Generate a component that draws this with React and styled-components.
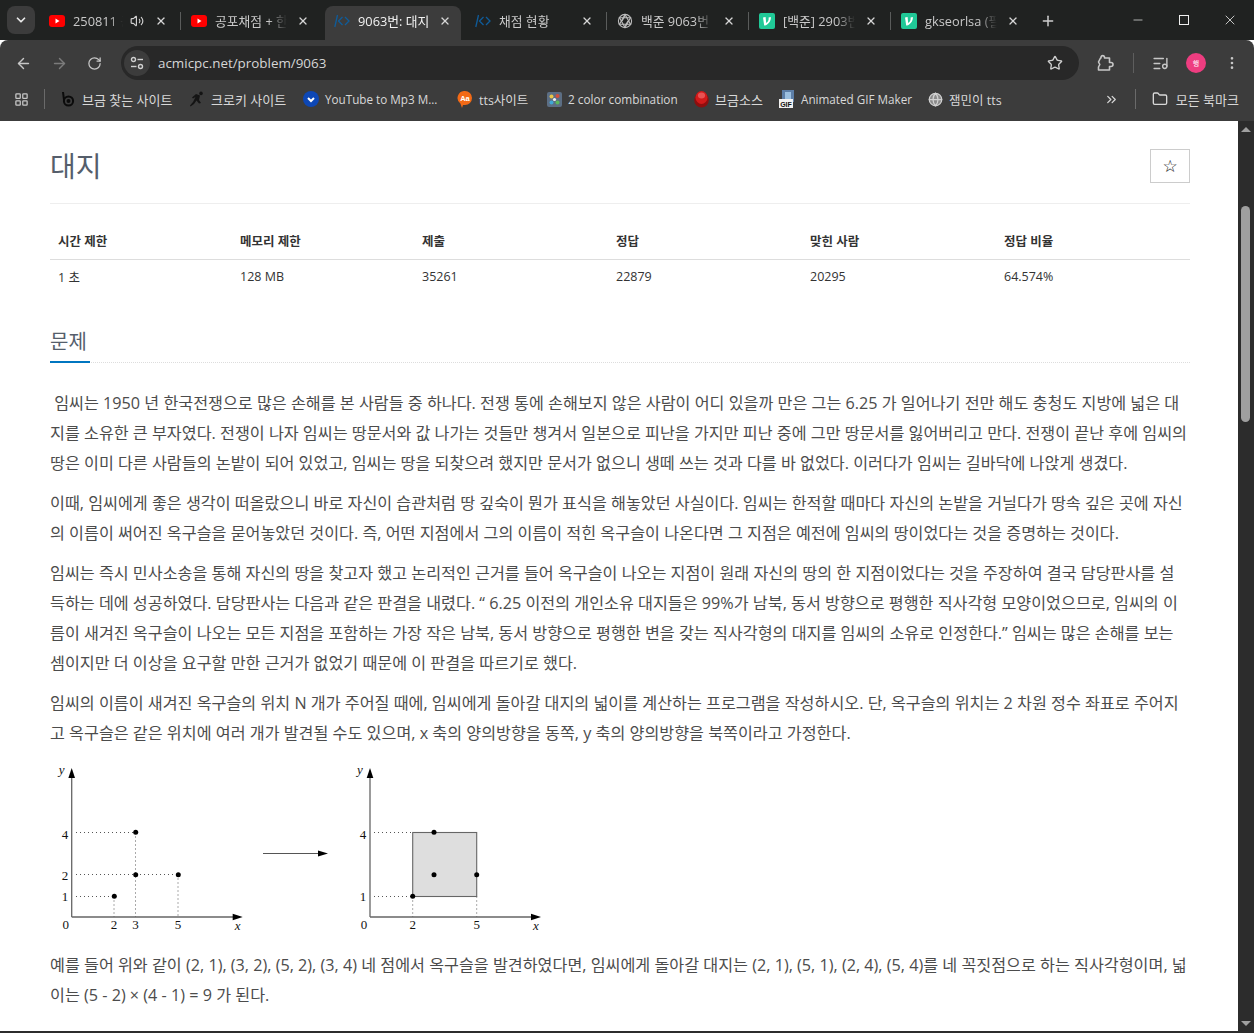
import styled, { createGlobalStyle } from "styled-components";
import {
  ArrowLeft,
  ArrowRight,
  RotateCw,
  Star,
  X,
  Plus,
  ChevronDown,
  Minus,
  Volume2,
  EllipsisVertical,
  LayoutGrid,
  ChevronsRight,
  Folder,
  ListMusic,
  Globe,
} from "lucide-react";

const GlobalStyle = createGlobalStyle`
  html, body {
    margin: 0;
    padding: 0;
    overflow: hidden;
    background: #fff;
  }
  * {
    box-sizing: border-box;
  }
`;

const uiFont = `"Open Sans", "Noto Sans CJK KR", sans-serif`;

const Window = styled.div`
  width: 1254px;
  height: 1033px;
  display: flex;
  flex-direction: column;
  overflow: hidden;
  font-family: ${uiFont};
`;

const TabStrip = styled.div`
  height: 40px;
  flex: none;
  display: flex;
  align-items: flex-start;
  padding: 6px 0 0 7px;
  background: #202221;
`;

const TabMenu = styled.div`
  width: 28px;
  height: 28px;
  margin-right: 6px;
  border-radius: 8px;
  background: #3c3c3c;
  color: #e8e8e8;
  display: flex;
  align-items: center;
  justify-content: center;
`;

const Tab = styled.div`
  position: relative;
  width: 142px;
  height: 34px;
  display: flex;
  align-items: flex-start;
  padding: 6px 0 0 ${(p) => (p.$active ? 9 : 8)}px;
  color: ${(p) => (p.$active ? "#f1f1f1" : "#c9c9c9")};
  font-size: 12.8px;
  line-height: 18px;

  &::before {
    content: "";
    display: ${(p) => (p.$active ? "block" : "none")};
    position: absolute;
    left: 0;
    top: 0;
    width: 136px;
    height: 34px;
    background: #3c3c3c;
    border-radius: 8px 8px 0 0;
  }

  &::after {
    content: "";
    display: ${(p) => (p.$divider ? "block" : "none")};
    position: absolute;
    left: -3px;
    top: 6px;
    width: 1px;
    height: 18px;
    background: #5a5c5b;
  }
`;

const TabIcon = styled.span`
  position: relative;
  width: 16px;
  height: 18px;
  flex: none;
  display: flex;
  align-items: center;
  justify-content: center;
`;

const TabTitle = styled.span`
  position: relative;
  width: ${(p) => p.$w}px;
  margin-left: 8px;
  overflow: hidden;
  white-space: nowrap;
  -webkit-mask-image: linear-gradient(to right, #000 ${(p) => p.$fade}%, transparent);
  mask-image: linear-gradient(to right, #000 ${(p) => p.$fade}%, transparent);
`;

const TabSound = styled.span`
  position: absolute;
  left: 89px;
  top: 8px;
  color: #d0d0d0;
  display: flex;
`;

const TabClose = styled.span`
  position: absolute;
  left: 114px;
  top: 9px;
  color: #d6d6d6;
  display: flex;
`;

const NewTab = styled.div`
  margin: 7px 0 0 5px;
  color: #d0d0d0;
  display: flex;
`;

const WindowControls = styled.div`
  margin-left: auto;
  padding-right: 1px;
  display: flex;
  color: #efefef;
`;

const WindowButton = styled.div`
  width: 46px;
  height: 28px;
  display: flex;
  align-items: center;
  justify-content: center;
`;

const MaximizeBox = styled.div`
  width: 10px;
  height: 10px;
  border: 1px solid #efefef;
`;

const Toolbar = styled.div`
  height: 40px;
  flex: none;
  display: flex;
  align-items: center;
  padding: 6px 0 0 15px;
  background: #3c3c3c;
  border-radius: 8px 8px 0 0;
  color: #c7c7c7;
`;

const NavButton = styled.div`
  width: 36px;
  height: 20px;
  display: flex;
  align-items: center;
  justify-content: flex-start;
  color: ${(p) => (p.$off ? "#7b7b7b" : "#c7c7c7")};
`;

const AddressBar = styled.div`
  width: 958px;
  height: 34px;
  margin-left: -2px;
  border-radius: 17px;
  background: #282828;
  display: flex;
  align-items: center;
  padding: 0 16px 0 3px;
`;

const SiteInfo = styled.div`
  width: 26px;
  height: 26px;
  margin-right: 8px;
  border-radius: 50%;
  background: #3c3c3c;
  color: #d0d0d0;
  display: flex;
  align-items: center;
  justify-content: center;
`;

const UrlText = styled.span`
  flex: 1;
  font-size: 13.4px;
  color: #d6d6d6;
`;

const ToolIcons = styled.div`
  display: flex;
  align-items: center;
  margin-left: 17px;
  color: #c7c7c7;
`;

const ToolDivider = styled.div`
  width: 1px;
  height: 20px;
  margin: 0 18px 0 19px;
  background: #5e5e5e;
`;

const Avatar = styled.div`
  width: 20px;
  height: 20px;
  margin: 0 18px 0 17px;
  border-radius: 50%;
  background: #ee3d80;
  color: #fff;
  font-size: 7px;
  display: flex;
  align-items: center;
  justify-content: center;
`;

const BookmarkBar = styled.div`
  height: 41px;
  flex: none;
  display: flex;
  align-items: center;
  padding: 0 0 3px 14px;
  background: #3c3c3c;
  color: #c7c7c7;
`;

const BarDivider = styled.div`
  width: 1px;
  height: 20px;
  margin: ${(p) => p.$m};
  background: #6a6a6a;
`;

const Bookmark = styled.div`
  width: ${(p) => p.$w}px;
  flex: none;
  display: flex;
  align-items: center;
  gap: 6px;
  font-size: ${(p) => p.$size}px;
  white-space: nowrap;
  color: #d8d8d8;
`;

const BookmarkIcon = styled.span`
  width: 16px;
  height: 16px;
  flex: none;
  display: flex;
  align-items: center;
  justify-content: center;
`;

const AllBookmarks = styled.div`
  margin-left: auto;
  padding-right: 15px;
  display: flex;
  align-items: center;
  gap: 8px;
  font-size: 13px;
  color: #d8d8d8;
`;

const Viewport = styled.div`
  flex: 1;
  min-height: 0;
  display: flex;
  border-bottom: 2px solid #2c2c2c;
`;

const Page = styled.main`
  flex: 1;
  min-width: 0;
  padding: 28px 48px 0 50px;
  background: #fff;
  color: #555;
  overflow: hidden;
`;

const Scrollbar = styled.div`
  width: 16px;
  flex: none;
  position: relative;
  background: #2c2c2c;
`;

const ScrollArrow = styled.div`
  position: absolute;
  left: 3px;
  ${(p) => (p.$down ? "bottom: 5px;" : "top: 6px;")}
  width: 0;
  height: 0;
  border-left: 5px solid transparent;
  border-right: 5px solid transparent;
  ${(p) => (p.$down ? "border-top" : "border-bottom")}: 5px solid #a0a0a0;
`;

const ScrollThumb = styled.div`
  position: absolute;
  left: 3px;
  top: 85px;
  width: 9px;
  height: 216px;
  border-radius: 5px;
  background: #9f9f9f;
`;

const TitleRow = styled.header`
  height: 55px;
  display: flex;
  justify-content: space-between;
  border-bottom: 1px solid #eee;
`;

const Title = styled.h1`
  margin: 0;
  font-size: 28px;
  line-height: 34px;
  font-weight: 400;
  color: #555e6b;
`;

const StarButton = styled.div`
  width: 40px;
  height: 34px;
  border: 1px solid #ccc;
  color: #111;
  display: flex;
  align-items: center;
  justify-content: center;
  font-size: 17px;
  font-family: "DejaVu Sans", sans-serif;
`;

const InfoTable = styled.table`
  width: 100%;
  margin-top: 20px;
  border-collapse: collapse;
  table-layout: fixed;
  font-size: 12.5px;
`;

const Th = styled.th`
  width: ${(p) => p.$w}px;
  height: 35px;
  padding: 0 8px 2px;
  text-align: left;
  font-weight: 700;
  color: #333;
  border-bottom: 1px solid #ddd;
`;

const Td = styled.td`
  height: 35px;
  padding: 0 8px;
  color: #333;
`;

const SectionHead = styled.div`
  position: relative;
  margin-top: 30px;
  height: 39px;
  border-bottom: 1px dotted #ddd;
`;

const SectionTitle = styled.h2`
  margin: 0;
  font-size: 20px;
  line-height: 36px;
  font-weight: 400;
  color: #555e6b;
`;

const SectionBar = styled.div`
  position: absolute;
  left: 0;
  bottom: -1px;
  width: 40px;
  height: 2px;
  background: #0076c0;
`;

const Description = styled.section`
  padding-top: 25px;
`;

const Para = styled.p`
  margin: 0 0 10px;
  font-size: 16.2px;
  line-height: 30px;
  color: #4c4c4c;
`;

const Line = styled.span`
  display: block;
  white-space: nowrap;
`;

const FigureWrap = styled.div`
  height: 190px;
  margin: -3px 0 5px;
`;

const lucide = { strokeWidth: 2 };

const Youtube = () => (
  <svg width="16" height="12" viewBox="0 0 16 12">
    <rect width="16" height="12" rx="3" fill="#f00" />
    <path d="M6.5 3.5 L10.5 6 L6.5 8.5 Z" fill="#fff" />
  </svg>
);

const Boj = () => (
  <svg width="16" height="14" viewBox="0 0 16 14" fill="none" stroke="#0f5c9a" strokeWidth="1.3">
    <path d="M3.5 1 L0.8 13" />
    <path d="M8.5 3 L4.5 7 L8.5 11" />
    <path d="M11 3 L15 7 L11 11" />
  </svg>
);

const Velog = () => (
  <svg width="16" height="16" viewBox="0 0 16 16">
    <rect width="16" height="16" rx="2" fill="#20c997" />
    <path d="M4 4.5 L6.6 4 L7.2 10 C9 8.6 10 7 9.6 4.4 L11.8 4 C12.3 7.5 10 11 6.2 12.6 L5.2 12.6 Z" fill="#fff" />
  </svg>
);

const ChatKnot = () => (
  <svg width="16" height="16" viewBox="0 0 16 16" fill="none" stroke="#bdbdbd" strokeWidth="1.1">
    <circle cx="8" cy="8" r="6.6" />
    <path d="M8 1.6 L13.5 11.2 L2.5 11.2 Z" />
    <path d="M8 14.4 L2.5 4.8 L13.5 4.8 Z" />
    <path d="M5 8 L8 3 M11 8 L8 13" />
  </svg>
);

const TuneIcon = () => (
  <svg width="14" height="14" viewBox="0 0 14 14" fill="none" stroke="#d0d0d0" strokeWidth="1.4">
    <circle cx="3.5" cy="3.5" r="2" />
    <path d="M7.5 3.5 H13" />
    <circle cx="10.5" cy="10.5" r="2" />
    <path d="M1 10.5 H6.5" />
  </svg>
);

const ExtensionIcon = () => (
  <svg width="18" height="18" viewBox="0 0 18 18" fill="none" stroke="#c7c7c7" strokeWidth="1.6" strokeLinejoin="round">
    <path d="M2.5 16 H13.5 V12.5 H15 A1.8 1.8 0 0 0 15 8.5 H13.5 V4 H8.5 V3 A1.8 1.8 0 0 0 5 3 V4 H4.5 L2.5 8 L3.8 10.5 L2.5 13 Z" />
  </svg>
);

const BrandB = () => (
  <svg width="14" height="16" viewBox="0 0 14 16" fill="none" stroke="#0b0b0b" strokeWidth="2">
    <path d="M2 1 L3 9" />
    <circle cx="7.5" cy="10" r="4.6" />
    <circle cx="7.5" cy="10" r="1" />
  </svg>
);

const Runner = () => (
  <svg width="16" height="16" viewBox="0 0 16 16" fill="#141414">
    <circle cx="12" cy="2.4" r="1.8" />
    <path d="M7 3 L11 4.5 L10 9 L12 12 L10 12.6 L7.5 9.6 L5 13 L1.5 15.5 L1 14.5 L4 11 L6.5 6 L4 7.5 L3 6.5 Z" />
  </svg>
);

const BlueBadge = () => (
  <svg width="16" height="16" viewBox="0 0 16 16">
    <circle cx="8" cy="8" r="8" fill="#0d47b5" />
    <path d="M5 7 L8 10 L11 7" fill="none" stroke="#fff" strokeWidth="2" />
  </svg>
);

const AaBubble = () => (
  <svg width="16" height="17" viewBox="0 0 16 17">
    <path d="M8 0 A7 7 0 0 1 8 14 L6 14 L5 17 L3.4 12.6 A7 7 0 0 1 8 0 Z" fill="#f36a16" />
    <text x="8" y="10" textAnchor="middle" fontSize="7.5" fontWeight="700" fontFamily="Liberation Sans, sans-serif" fill="#fff">
      Aa
    </text>
  </svg>
);

const ColorCombo = () => (
  <svg width="15" height="15" viewBox="0 0 15 15">
    <rect width="15" height="15" rx="2" fill="#5c6e84" />
    <circle cx="4.5" cy="4.5" r="2" fill="#e8c547" />
    <circle cx="10.5" cy="4" r="2" fill="#d24f3c" />
    <circle cx="4.5" cy="10.5" r="2" fill="#3fa7d6" />
    <circle cx="10.5" cy="10.5" r="2" fill="#5cb85c" />
    <circle cx="7.5" cy="7.5" r="1.6" fill="#f2f2f2" />
  </svg>
);

const RedButton = () => (
  <svg width="15" height="18" viewBox="0 0 15 18">
    <ellipse cx="7.5" cy="10" rx="7.3" ry="7.6" fill="#8e0f0f" />
    <ellipse cx="7.5" cy="7.5" rx="6" ry="6.5" fill="#d11a1a" />
    <ellipse cx="7.5" cy="5.5" rx="3.6" ry="3" fill="#e85252" />
  </svg>
);

const GifFilm = () => (
  <svg width="16" height="18" viewBox="0 0 16 18">
    <rect x="3" y="0" width="12" height="12" fill="#5d7fa8" />
    <rect x="6" y="2" width="6" height="7" fill="#9cc0e0" />
    <rect x="0" y="9" width="14" height="9" fill="#f2f2f2" />
    <text x="7" y="16.5" textAnchor="middle" fontSize="7" fontWeight="700" fontFamily="Liberation Sans, sans-serif" fill="#111">
      GIF
    </text>
  </svg>
);

const tabs = [
  { icon: <Youtube />, title: "250811 공포", w: 50, fade: 75, sound: true },
  { icon: <Youtube />, title: "공포채점 + 한", w: 72, fade: 75, divider: true },
  { icon: <Boj />, title: "9063번: 대지", w: 80, fade: 100, active: true },
  { icon: <Boj />, title: "채점 현황", w: 74, fade: 100 },
  { icon: <ChatKnot />, title: "백준 9063번", w: 72, fade: 75, divider: true },
  { icon: <Velog />, title: "[백준] 2903번", w: 72, fade: 75, divider: true },
  { icon: <Velog />, title: "gkseorlsa (필", w: 72, fade: 75, divider: true },
];

const bookmarks = [
  { icon: <BrandB />, label: "브금 찾는 사이트", w: 129, size: 13 },
  { icon: <Runner />, label: "크로키 사이트", w: 114, size: 13 },
  { icon: <BlueBadge />, label: "YouTube to Mp3 M...", w: 154, size: 11.7 },
  { icon: <AaBubble />, label: "tts사이트", w: 89, size: 12.5 },
  { icon: <ColorCombo />, label: "2 color combination", w: 147, size: 11.8 },
  { icon: <RedButton />, label: "브금소스", w: 86, size: 13 },
  { icon: <GifFilm />, label: "Animated GIF Maker", w: 148, size: 11.7 },
  { icon: <Globe size={15} color="#d0d0d0" fill="#8a8a8a" />, label: "잼민이 tts", w: 150, size: 12.5 },
];

const columns = [
  { name: "시간 제한", value: "1 초", w: 182 },
  { name: "메모리 제한", value: "128 MB", w: 182 },
  { name: "제출", value: "35261", w: 194 },
  { name: "정답", value: "22879", w: 194 },
  { name: "맞힌 사람", value: "20295", w: 194 },
  { name: "정답 비율", value: "64.574%", w: 194 },
];

const paragraphs = [
  [
    "\u00a0임씨는 1950 년 한국전쟁으로 많은 손해를 본 사람들 중 하나다. 전쟁 통에 손해보지 않은 사람이 어디 있을까 만은 그는 6.25 가 일어나기 전만 해도 충청도 지방에 넓은 대",
    "지를 소유한 큰 부자였다. 전쟁이 나자 임씨는 땅문서와 값 나가는 것들만 챙겨서 일본으로 피난을 가지만 피난 중에 그만 땅문서를 잃어버리고 만다. 전쟁이 끝난 후에 임씨의",
    "땅은 이미 다른 사람들의 논밭이 되어 있었고, 임씨는 땅을 되찾으려 했지만 문서가 없으니 생떼 쓰는 것과 다를 바 없었다. 이러다가 임씨는 길바닥에 나앉게 생겼다.",
  ],
  [
    "이때, 임씨에게 좋은 생각이 떠올랐으니 바로 자신이 습관처럼 땅 깊숙이 뭔가 표식을 해놓았던 사실이다. 임씨는 한적할 때마다 자신의 논밭을 거닐다가 땅속 깊은 곳에 자신",
    "의 이름이 써어진 옥구슬을 묻어놓았던 것이다. 즉, 어떤 지점에서 그의 이름이 적힌 옥구슬이 나온다면 그 지점은 예전에 임씨의 땅이었다는 것을 증명하는 것이다.",
  ],
  [
    "임씨는 즉시 민사소송을 통해 자신의 땅을 찾고자 했고 논리적인 근거를 들어 옥구슬이 나오는 지점이 원래 자신의 땅의 한 지점이었다는 것을 주장하여 결국 담당판사를 설",
    "득하는 데에 성공하였다. 담당판사는 다음과 같은 판결을 내렸다. “ 6.25 이전의 개인소유 대지들은 99%가 남북, 동서 방향으로 평행한 직사각형 모양이었으므로, 임씨의 이",
    "름이 새겨진 옥구슬이 나오는 모든 지점을 포함하는 가장 작은 남북, 동서 방향으로 평행한 변을 갖는 직사각형의 대지를 임씨의 소유로 인정한다.” 임씨는 많은 손해를 보는",
    "셈이지만 더 이상을 요구할 만한 근거가 없었기 때문에 이 판결을 따르기로 했다.",
  ],
  [
    "임씨의 이름이 새겨진 옥구슬의 위치 N 개가 주어질 때에, 임씨에게 돌아갈 대지의 넓이를 계산하는 프로그램을 작성하시오. 단, 옥구슬의 위치는 2 차원 정수 좌표로 주어지",
    "고 옥구슬은 같은 위치에 여러 개가 발견될 수도 있으며, x 축의 양의방향을 동쪽, y 축의 양의방향을 북쪽이라고 가정한다.",
  ],
];

const closing = [
  "예를 들어 위와 같이 (2, 1), (3, 2), (5, 2), (3, 4) 네 점에서 옥구슬을 발견하였다면, 임씨에게 돌아갈 대지는 (2, 1), (5, 1), (2, 4), (5, 4)를 네 꼭짓점으로 하는 직사각형이며, 넓",
  "이는 (5 - 2) × (4 - 1) = 9 가 된다.",
];

const Label = ({ x, y, italic, children }) => (
  <text
    x={x}
    y={y}
    textAnchor="middle"
    fontSize="13"
    fontStyle={italic ? "italic" : "normal"}
    fontFamily="Liberation Serif, serif"
    fill="#111"
  >
    {children}
  </text>
);

const Dots = ({ d }) => <path d={d} fill="none" stroke="#555" strokeWidth="1" strokeDasharray="1 3" />;

const Dot = ({ x, y }) => <circle cx={x} cy={y} r="2.5" fill="#000" />;

// axes shared by both plots, ox is where the y axis sits
const Axes = ({ ox }) => (
  <g>
    <path d={`M${ox} 162 L${ox} 20 M${ox} 162 L${ox + 163} 162`} stroke="#666" strokeWidth="1.3" fill="none" />
    <path d={`M${ox - 3.3} 23 L${ox} 13 L${ox + 3.3} 23 Z`} fill="#000" />
    <path d={`M${ox + 161} 158.8 L${ox + 171} 162 L${ox + 161} 165.2 Z`} fill="#000" />
    <Label x={ox - 6} y={174}>0</Label>
    <Label x={ox + 166} y={175} italic>x</Label>
    <Label x={ox - 10} y={19} italic>y</Label>
  </g>
);

const Figure = () => (
  <svg width="510" height="190" viewBox="0 0 510 190" style={{ display: "block" }}>
    <Axes ox={21.7} />
    <Dots d="M26 77.5 H85 M26 119.5 H128 M26 141.5 H64 M85.5 77.5 V162 M64 141.5 V162 M128 119.5 V162" />
    <Label x={15} y={83.5}>4</Label>
    <Label x={15} y={124.5}>2</Label>
    <Label x={15} y={146}>1</Label>
    <Label x={64} y={174}>2</Label>
    <Label x={85.5} y={174}>3</Label>
    <Label x={128} y={174}>5</Label>
    <Dot x={64.3} y={141.3} />
    <Dot x={85.7} y={77.3} />
    <Dot x={85.7} y={119.7} />
    <Dot x={128.3} y={119.7} />

    <path d="M213 98.5 H268" stroke="#555" strokeWidth="1" />
    <path d="M268 95.5 L278 98.5 L268 101.5 Z" fill="#000" />

    <Axes ox={320} />
    <Dots d="M324 77.5 H362 M324 141.5 H362 M362.7 141.5 V162 M426.7 141.5 V162" />
    <rect x="362.7" y="77.5" width="64" height="64" fill="#dedede" stroke="#666" strokeWidth="1.1" />
    <Label x={313} y={83.5}>4</Label>
    <Label x={313} y={146}>1</Label>
    <Label x={362.7} y={174}>2</Label>
    <Label x={426.7} y={174}>5</Label>
    <Dot x={362.7} y={141.3} />
    <Dot x={384} y={77.3} />
    <Dot x={384} y={119.7} />
    <Dot x={426.7} y={119.7} />
  </svg>
);

export default function App() {
  return (
    <Window>
      <GlobalStyle />
      <TabStrip>
        <TabMenu>
          <ChevronDown size={14} strokeWidth={3} />
        </TabMenu>
        {tabs.map((tab) => (
          <Tab key={tab.title} $active={tab.active} $divider={tab.divider}>
            <TabIcon>{tab.icon}</TabIcon>
            <TabTitle $w={tab.w} $fade={tab.fade}>
              {tab.title}
            </TabTitle>
            {tab.sound && (
              <TabSound>
                <Volume2 size={14} {...lucide} />
              </TabSound>
            )}
            <TabClose>
              <X size={12} strokeWidth={2.6} />
            </TabClose>
          </Tab>
        ))}
        <NewTab>
          <Plus size={16} strokeWidth={2.2} />
        </NewTab>
        <WindowControls>
          <WindowButton>
            <Minus size={14} strokeWidth={1.2} />
          </WindowButton>
          <WindowButton>
            <MaximizeBox />
          </WindowButton>
          <WindowButton>
            <X size={16} strokeWidth={1.2} />
          </WindowButton>
        </WindowControls>
      </TabStrip>

      <Toolbar>
        <NavButton>
          <ArrowLeft size={17} {...lucide} />
        </NavButton>
        <NavButton $off>
          <ArrowRight size={17} {...lucide} />
        </NavButton>
        <NavButton>
          <RotateCw size={15} {...lucide} />
        </NavButton>
        <AddressBar>
          <SiteInfo>
            <TuneIcon />
          </SiteInfo>
          <UrlText>acmicpc.net/problem/9063</UrlText>
          <Star size={16} color="#d0d0d0" {...lucide} />
        </AddressBar>
        <ToolIcons>
          <ExtensionIcon />
          <ToolDivider />
          <ListMusic size={17} {...lucide} />
          <Avatar>행</Avatar>
          <EllipsisVertical size={16} {...lucide} />
        </ToolIcons>
      </Toolbar>

      <BookmarkBar>
        <LayoutGrid size={15} {...lucide} />
        <BarDivider $m="0 15px 0 15px" />
        {bookmarks.map((item) => (
          <Bookmark key={item.label} $w={item.w} $size={item.size}>
            <BookmarkIcon>{item.icon}</BookmarkIcon>
            {item.label}
          </Bookmark>
        ))}
        <AllBookmarks>
          <ChevronsRight size={15} {...lucide} />
          <BarDivider $m="0 8px 0 8px" />
          <Folder size={16} {...lucide} />
          모든 북마크
        </AllBookmarks>
      </BookmarkBar>

      <Viewport>
        <Page>
          <TitleRow>
            <Title>대지</Title>
            <StarButton>☆</StarButton>
          </TitleRow>

          <InfoTable>
            <thead>
              <tr>
                {columns.map((col) => (
                  <Th key={col.name} $w={col.w}>
                    {col.name}
                  </Th>
                ))}
              </tr>
            </thead>
            <tbody>
              <tr>
                {columns.map((col) => (
                  <Td key={col.name}>{col.value}</Td>
                ))}
              </tr>
            </tbody>
          </InfoTable>

          <SectionHead>
            <SectionTitle>문제</SectionTitle>
            <SectionBar />
          </SectionHead>

          <Description>
            {paragraphs.map((lines) => (
              <Para key={lines[0]}>
                {lines.map((line) => (
                  <Line key={line}>{line}</Line>
                ))}
              </Para>
            ))}
            <FigureWrap>
              <Figure />
            </FigureWrap>
            <Para>
              {closing.map((line) => (
                <Line key={line}>{line}</Line>
              ))}
            </Para>
          </Description>
        </Page>
        <Scrollbar>
          <ScrollArrow />
          <ScrollThumb />
          <ScrollArrow $down />
        </Scrollbar>
      </Viewport>
    </Window>
  );
}
